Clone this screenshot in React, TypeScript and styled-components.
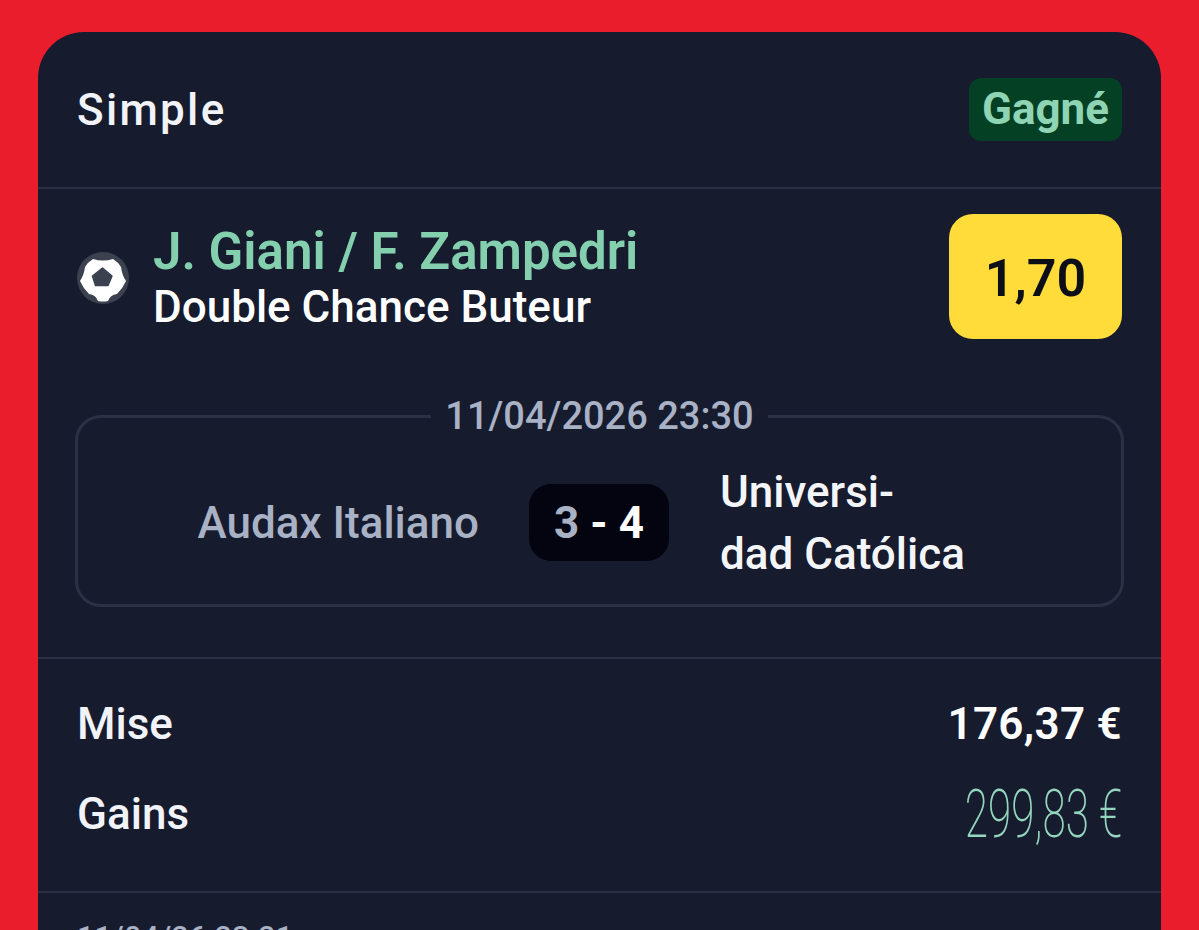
import React from 'react';
import styled, { createGlobalStyle } from 'styled-components';

const GlobalStyle = createGlobalStyle`
  html, body {
    margin: 0;
    height: 930px;
    overflow: hidden;
    background: #ea1d2c;
    font-family: Roboto, "Liberation Sans", sans-serif;
  }
`;

const Page = styled.div`
  height: 930px;
  overflow: hidden;
  padding: 32px 38px 0;
  box-sizing: border-box;
`;

const Card = styled.div`
  background: #161b2e;
  border-radius: 46px 46px 0 0;
  min-height: 1000px;
`;

const Header = styled.div`
  height: 155px;
  padding: 0 39px;
  display: flex;
  align-items: center;
  justify-content: space-between;
  box-sizing: border-box;
`;

const BetType = styled.div`
  color: #f1f3f8;
  font-size: 44px;
  font-weight: 500;
  letter-spacing: 2.3px;
`;

const StatusBadge = styled.div`
  background: #044023;
  color: #8fd4b4;
  border-radius: 12px;
  font-size: 44px;
  font-weight: 700;
  line-height: 63px;
  padding: 0 13px;
`;

const Divider = styled.div`
  height: 2px;
  background: #2b3145;
`;

const Selection = styled.div`
  display: flex;
  align-items: center;
  padding: 25px 39px 0;
  height: 125px;
`;

const BallIcon = styled.svg`
  width: 52px;
  height: 52px;
  flex: none;
  margin-right: 24px;
  margin-top: 2px;
`;

const SelectionText = styled.div`
  flex: 1;
  padding-top: 6px;
`;

const PlayerName = styled.div`
  color: #84d0ae;
  font-size: 51px;
  font-weight: 600;
  line-height: 56px;
`;

const Market = styled.div`
  color: #fff;
  font-size: 44px;
  font-weight: 500;
  line-height: 55px;
`;

const Odds = styled.div`
  width: 173px;
  height: 125px;
  border-radius: 24px;
  background: #ffdc3a;
  color: #0d0f18;
  font-size: 52px;
  font-weight: 600;
  line-height: 129px;
  text-align: center;
`;

const MatchBox = styled.fieldset`
  margin: 58px 37px 50px;
  padding: 0;
  height: 210px;
  box-sizing: border-box;
  border: 3px solid #2b3145;
  border-radius: 26px;
  display: flex;
  align-items: center;
`;

const MatchDate = styled.legend`
  color: #a9b1c5;
  font-size: 38px;
  font-weight: 500;
  padding: 0 14px;
  margin: 0 auto;
  line-height: 1;
`;

const MatchRow = styled.div`
  display: grid;
  grid-template-columns: 1fr auto 1fr;
  align-items: center;
  gap: 51px;
  width: 100%;
  margin-top: 6px;
`;

const Team = styled.div<{ $away?: boolean }>`
  color: ${(p) => (p.$away ? '#f4f5f9' : '#a9b1c5')};
  font-size: 44px;
  font-weight: 500;
  line-height: 62px;
  text-align: ${(p) => (p.$away ? 'left' : 'right')};
  width: ${(p) => (p.$away ? '320px' : 'auto')};
`;

const Score = styled.div`
  background: #03040f;
  border-radius: 22px;
  width: 140px;
  height: 77px;
  margin-left: -1px;
  display: flex;
  align-items: center;
  justify-content: center;
  gap: 11px;
  font-size: 44px;
  font-weight: 700;
`;

const ScoreValue = styled.span<{ $winner?: boolean }>`
  color: ${(p) => (p.$winner ? '#fff' : '#a9b1c5')};
`;

const Totals = styled.div`
  padding: 20px 39px 32px;
  display: grid;
`;

const TotalRow = styled.div`
  display: flex;
  align-items: center;
  justify-content: space-between;
  height: 90px;
`;

const TotalLabel = styled.div`
  color: #f1f3f8;
  font-size: 44px;
  font-weight: 500;
`;

const Stake = styled.div`
  color: #fff;
  font-size: 44px;
  font-weight: 600;
  letter-spacing: 0.3px;
`;

const Winnings = styled.div`
  color: #94d6bd;
  font-size: 66px;
  font-weight: 200;
  transform: scaleX(0.64);
  transform-origin: right center;
  white-space: nowrap;
`;

const PlacedAt = styled.div`
  color: #a9b1c5;
  font-size: 30px;
  font-weight: 500;
  padding: 26px 39px;
  letter-spacing: 0.5px;
`;

export default function App() {
  return (
    <Page>
      <GlobalStyle />
      <Card>
        <Header>
          <BetType>Simple</BetType>
          <StatusBadge>Gagné</StatusBadge>
        </Header>
        <Divider />
        <Selection>
          <BallIcon viewBox="0 0 52 52">
            <circle cx="26" cy="26" r="26" fill="#3c4150" />
            <path
              d="M16 7 Q26 10 36 7 Q41 10 44 15 Q45 23 49 29 Q46 36 40 42 Q33 43 31 49 Q26 50 21 49 Q19 43 12 42 Q6 36 3 29 Q7 23 8 15 Q11 10 16 7Z"
              fill="#fff"
            />
            <path
              d="M25.5 16 L35 24 L31 33.5 L18.5 33.5 L15.5 24 Z"
              fill="#3c4150"
              stroke="#3c4150"
              strokeWidth="1.5"
              strokeLinejoin="round"
            />
          </BallIcon>
          <SelectionText>
            <PlayerName>J. Giani / F. Zampedri</PlayerName>
            <Market>Double Chance Buteur</Market>
          </SelectionText>
          <Odds>1,70</Odds>
        </Selection>
        <MatchBox>
          <MatchDate>11/04/2026 23:30</MatchDate>
          <MatchRow>
            <Team>Audax Italiano</Team>
            <Score>
              <ScoreValue>3</ScoreValue>
              <ScoreValue $winner>-</ScoreValue>
              <ScoreValue $winner>4</ScoreValue>
            </Score>
            <Team $away>
              Universi-
              <br />
              dad Católica
            </Team>
          </MatchRow>
        </MatchBox>
        <Divider />
        <Totals>
          <TotalRow>
            <TotalLabel>Mise</TotalLabel>
            <Stake>176,37 €</Stake>
          </TotalRow>
          <TotalRow>
            <TotalLabel>Gains</TotalLabel>
            <Winnings>299,83 €</Winnings>
          </TotalRow>
        </Totals>
        <Divider />
        <PlacedAt>11/04/26 23:21</PlacedAt>
      </Card>
    </Page>
  );
}
